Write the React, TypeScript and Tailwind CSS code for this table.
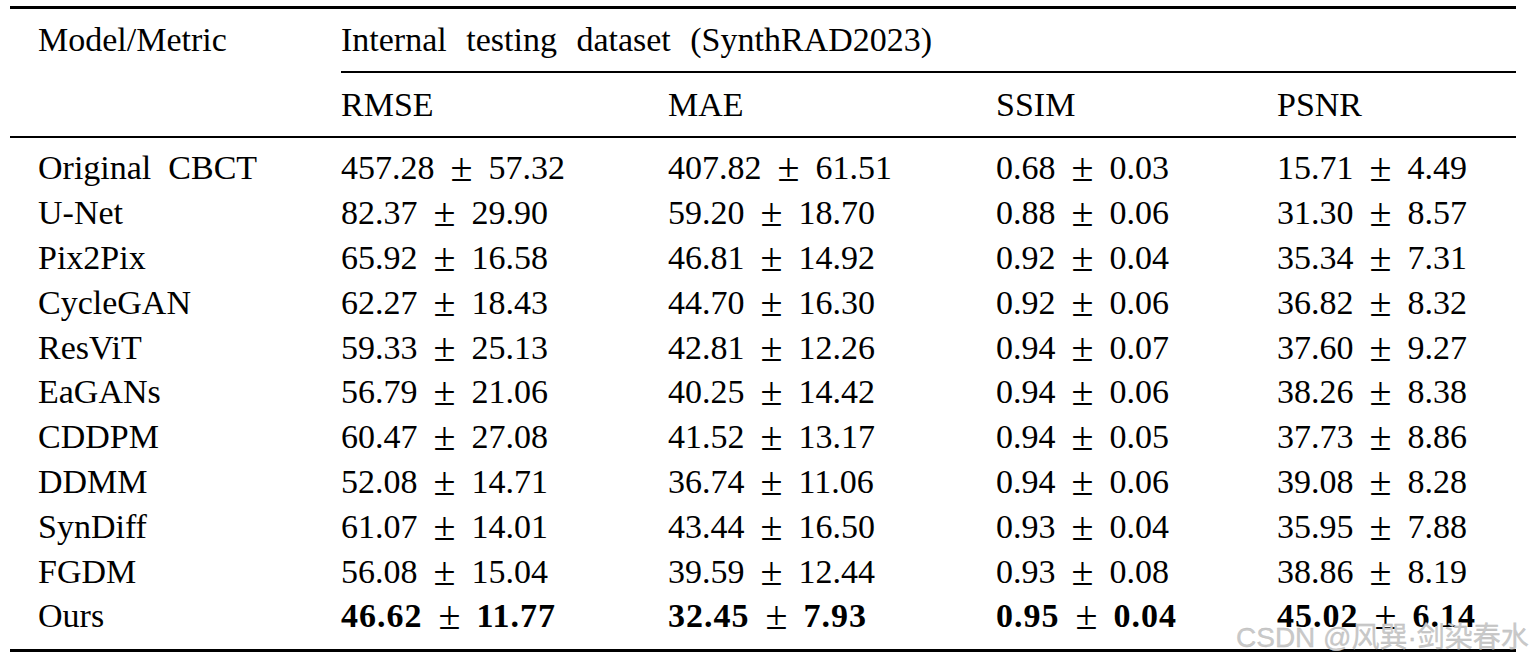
import React from "react";

type Row = { name: string; cells: [string, string][]; bold?: boolean };

const rows: Row[] = [
  { name: "Original  CBCT", cells: [["457.28", "57.32"], ["407.82", "61.51"], ["0.68", "0.03"], ["15.71", "4.49"]] },
  { name: "U-Net", cells: [["82.37", "29.90"], ["59.20", "18.70"], ["0.88", "0.06"], ["31.30", "8.57"]] },
  { name: "Pix2Pix", cells: [["65.92", "16.58"], ["46.81", "14.92"], ["0.92", "0.04"], ["35.34", "7.31"]] },
  { name: "CycleGAN", cells: [["62.27", "18.43"], ["44.70", "16.30"], ["0.92", "0.06"], ["36.82", "8.32"]] },
  { name: "ResViT", cells: [["59.33", "25.13"], ["42.81", "12.26"], ["0.94", "0.07"], ["37.60", "9.27"]] },
  { name: "EaGANs", cells: [["56.79", "21.06"], ["40.25", "14.42"], ["0.94", "0.06"], ["38.26", "8.38"]] },
  { name: "CDDPM", cells: [["60.47", "27.08"], ["41.52", "13.17"], ["0.94", "0.05"], ["37.73", "8.86"]] },
  { name: "DDMM", cells: [["52.08", "14.71"], ["36.74", "11.06"], ["0.94", "0.06"], ["39.08", "8.28"]] },
  { name: "SynDiff", cells: [["61.07", "14.01"], ["43.44", "16.50"], ["0.93", "0.04"], ["35.95", "7.88"]] },
  { name: "FGDM", cells: [["56.08", "15.04"], ["39.59", "12.44"], ["0.93", "0.08"], ["38.86", "8.19"]] },
  { name: "Ours", cells: [["46.62", "11.77"], ["32.45", "7.93"], ["0.95", "0.04"], ["45.02", "6.14"]], bold: true },
];

const cols = "grid grid-cols-[341px_327px_328px_281px_1fr]";

function Cell({ v, bold }: { v: [string, string]; bold?: boolean }) {
  const num = bold ? "font-bold tracking-[1px]" : "";
  return (
    <div className="whitespace-pre flex items-center">
      <span className={num}>{v[0]}</span>
      <span className="mx-[16px] text-[40px] leading-none">±</span>
      <span className={num}>{v[1]}</span>
    </div>
  );
}

export default function App() {
  return (
    <div
      className="relative w-[1536px] h-[665px] bg-white text-black pt-[6px] text-[34px] overflow-hidden"
      style={{ fontFamily: '"Liberation Serif", "Times New Roman", serif' }}
    >
      <div className="ml-[10px] w-[1506px] h-[3px] bg-black" />

      <div className={`${cols} h-[62px] items-center leading-none`}>
        <div className="pl-[38px]">Model/Metric</div>
        <div className="col-span-4 [word-spacing:11px]">Internal testing dataset (SynthRAD2023)</div>
      </div>
      <div className="ml-[341px] w-[1175px] h-[2px] bg-black" />

      <div className={`${cols} h-[63px] items-center leading-none`}>
        <div />
        <div>RMSE</div>
        <div>MAE</div>
        <div>SSIM</div>
        <div>PSNR</div>
      </div>
      <div className="ml-[10px] w-[1506px] h-[2px] bg-black" />

      <div className="pt-[8px]">
        {rows.map((r) => (
          <div key={r.name} className={`${cols} h-[44.8px] items-center leading-none`}>
            <div className="pl-[38px] whitespace-pre">{r.name}</div>
            {r.cells.map((c, i) => (
              <Cell key={i} v={c} bold={r.bold} />
            ))}
          </div>
        ))}
      </div>

      <div className="ml-[10px] mt-[10px] w-[1506px] h-[3px] bg-black" />

      <div
        className="absolute left-[1236px] top-[624px] text-[28px] leading-none text-[#c9c9c9] whitespace-nowrap"
        style={{ fontFamily: '"Liberation Sans", "Noto Sans CJK SC", sans-serif', WebkitTextStroke: "0.3px #bbb" }}
      >
        CSDN @风巽·剑染春水
      </div>
    </div>
  );
}
